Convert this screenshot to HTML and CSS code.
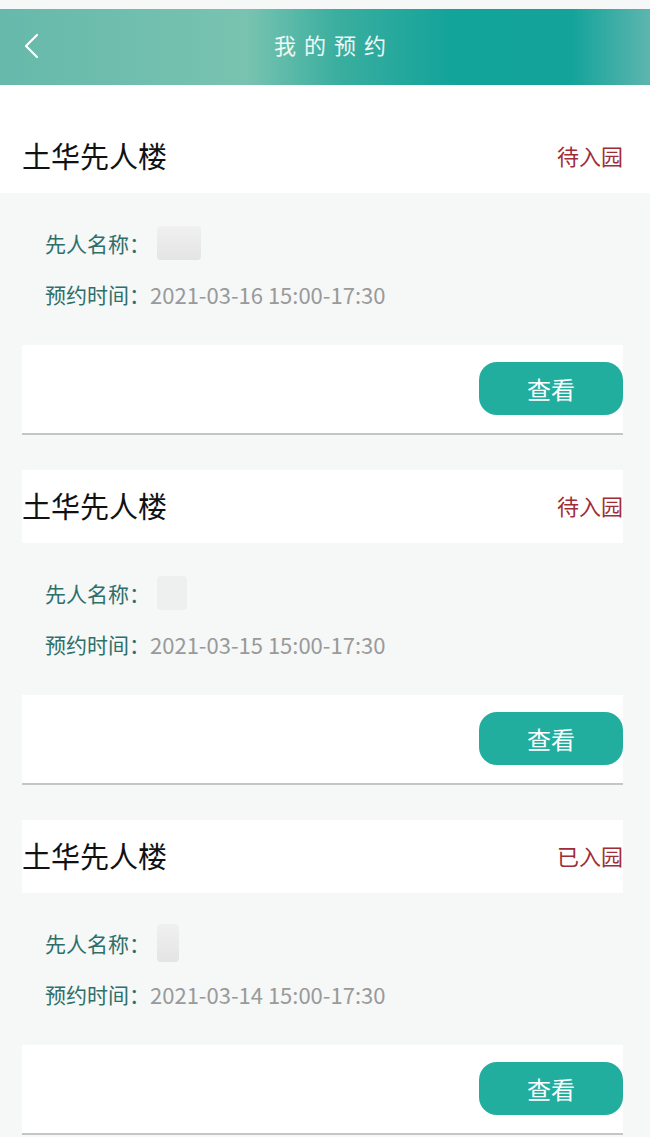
FILE: index.html
```html
<!DOCTYPE html>
<html lang="zh-CN">
<head>
    <meta charset="UTF-8">
    <meta name="viewport" content="width=device-width, initial-scale=1.0">
    <title>我的预约</title>
    <link rel="stylesheet" href="styles.css">
</head>
<body>
    <div class="topbar">
        <a class="back" href="#">
            <svg width="16" height="26" viewBox="0 0 16 26"><path d="M14 2 L3 13 L14 24" fill="none" stroke="#fff" stroke-width="2.2" stroke-linecap="round" stroke-linejoin="round"/></svg>
        </a>
        <h1>我的预约</h1>
    </div>

    <div class="list">
        <!-- 预约 1 -->
        <div class="card first">
            <div class="card-head">
                <span class="place">土华先人楼</span>
                <span class="status">待入园</span>
            </div>
            <div class="card-body">
                <p><span class="label">先人名称：</span><span class="blur"></span></p>
                <p><span class="label">预约时间：</span><span class="value">2021-03-16 15:00-17:30</span></p>
            </div>
            <div class="card-foot">
                <button>查看</button>
            </div>
        </div>
        <!-- 预约 2 -->
        <div class="card">
            <div class="card-head">
                <span class="place">土华先人楼</span>
                <span class="status">待入园</span>
            </div>
            <div class="card-body">
                <p><span class="label">先人名称：</span><span class="blur faint"></span></p>
                <p><span class="label">预约时间：</span><span class="value">2021-03-15 15:00-17:30</span></p>
            </div>
            <div class="card-foot">
                <button>查看</button>
            </div>
        </div>
        <!-- 预约 3 -->
        <div class="card">
            <div class="card-head">
                <span class="place">土华先人楼</span>
                <span class="status">已入园</span>
            </div>
            <div class="card-body">
                <p><span class="label">先人名称：</span><span class="blur narrow"></span></p>
                <p><span class="label">预约时间：</span><span class="value">2021-03-14 15:00-17:30</span></p>
            </div>
            <div class="card-foot">
                <button>查看</button>
            </div>
        </div>
    </div>
</body>
</html>
```

FILE: styles.css
```css
body {
    font-family: "Noto Sans CJK SC", "Noto Sans", sans-serif;
    margin: 0;
    padding-top: 9px;
    background-color: #f6f7f7;
}
.topbar {
    position: relative;
    height: 76px;
    display: flex;
    align-items: center;
    justify-content: center;
    background: linear-gradient(90deg, #66b9ab 0%, #79c3b0 38%, #3aae9f 52%, #12a39a 70%, #14a39b 88%, #5db6ae 100%);
}
.topbar h1 {
    margin: 0 0 6px;
    padding-left: 18px;
    color: #eef8f6;
    font-size: 22px;
    font-weight: normal;
    letter-spacing: 8px;
}
.back {
    position: absolute;
    left: 23px;
    top: 24px;
    display: block;
    width: 16px;
    height: 26px;
}
.list {
    padding: 0 27px 0 22px;
}
.card {
    margin-top: 35px;
}
.card.first {
    margin-top: 0;
}
.card-head {
    height: 73px;
    padding-bottom: 3px;
    box-sizing: border-box;
    display: flex;
    align-items: center;
    justify-content: space-between;
    background-color: #fff;
}
.card.first .card-head {
    height: 108px;
    margin: 0 -27px 0 -22px;
    padding: 34px 27px 3px 22px;
}
.place {
    font-size: 29px;
    color: #111;
}
.status {
    font-size: 22px;
    color: #9e2d38;
}
.card-body {
    height: 152px;
    box-sizing: border-box;
    padding: 35px 0 0 23px;
}
.card-body p {
    margin: 0 0 21px;
    height: 30px;
    display: flex;
    align-items: center;
    font-size: 21px;
}
.label {
    color: #2f6f6a;
}
.value {
    color: #9a9a9a;
    font-size: 22px;
}
.blur {
    display: inline-block;
    width: 44px;
    height: 34px;
    margin-left: 7px;
    border-radius: 4px;
    background: linear-gradient(180deg, #f0f0f0 0%, #e4e4e4 100%);
}
.blur.faint {
    width: 30px;
    background-color: #eef0f0;
    background-image: none;
}
.blur.narrow {
    width: 22px;
    height: 38px;
}
.card-foot {
    height: 88px;
    display: flex;
    align-items: flex-start;
    justify-content: flex-end;
    background-color: #fff;
    border-bottom: 2px solid #c4c6c6;
}
.card-foot button {
    margin-top: 17px;
    width: 144px;
    height: 53px;
    border: none;
    border-radius: 18px;
    background-color: #22ae9f;
    color: #fff;
    font-family: inherit;
    font-size: 24px;
    cursor: pointer;
}
```
